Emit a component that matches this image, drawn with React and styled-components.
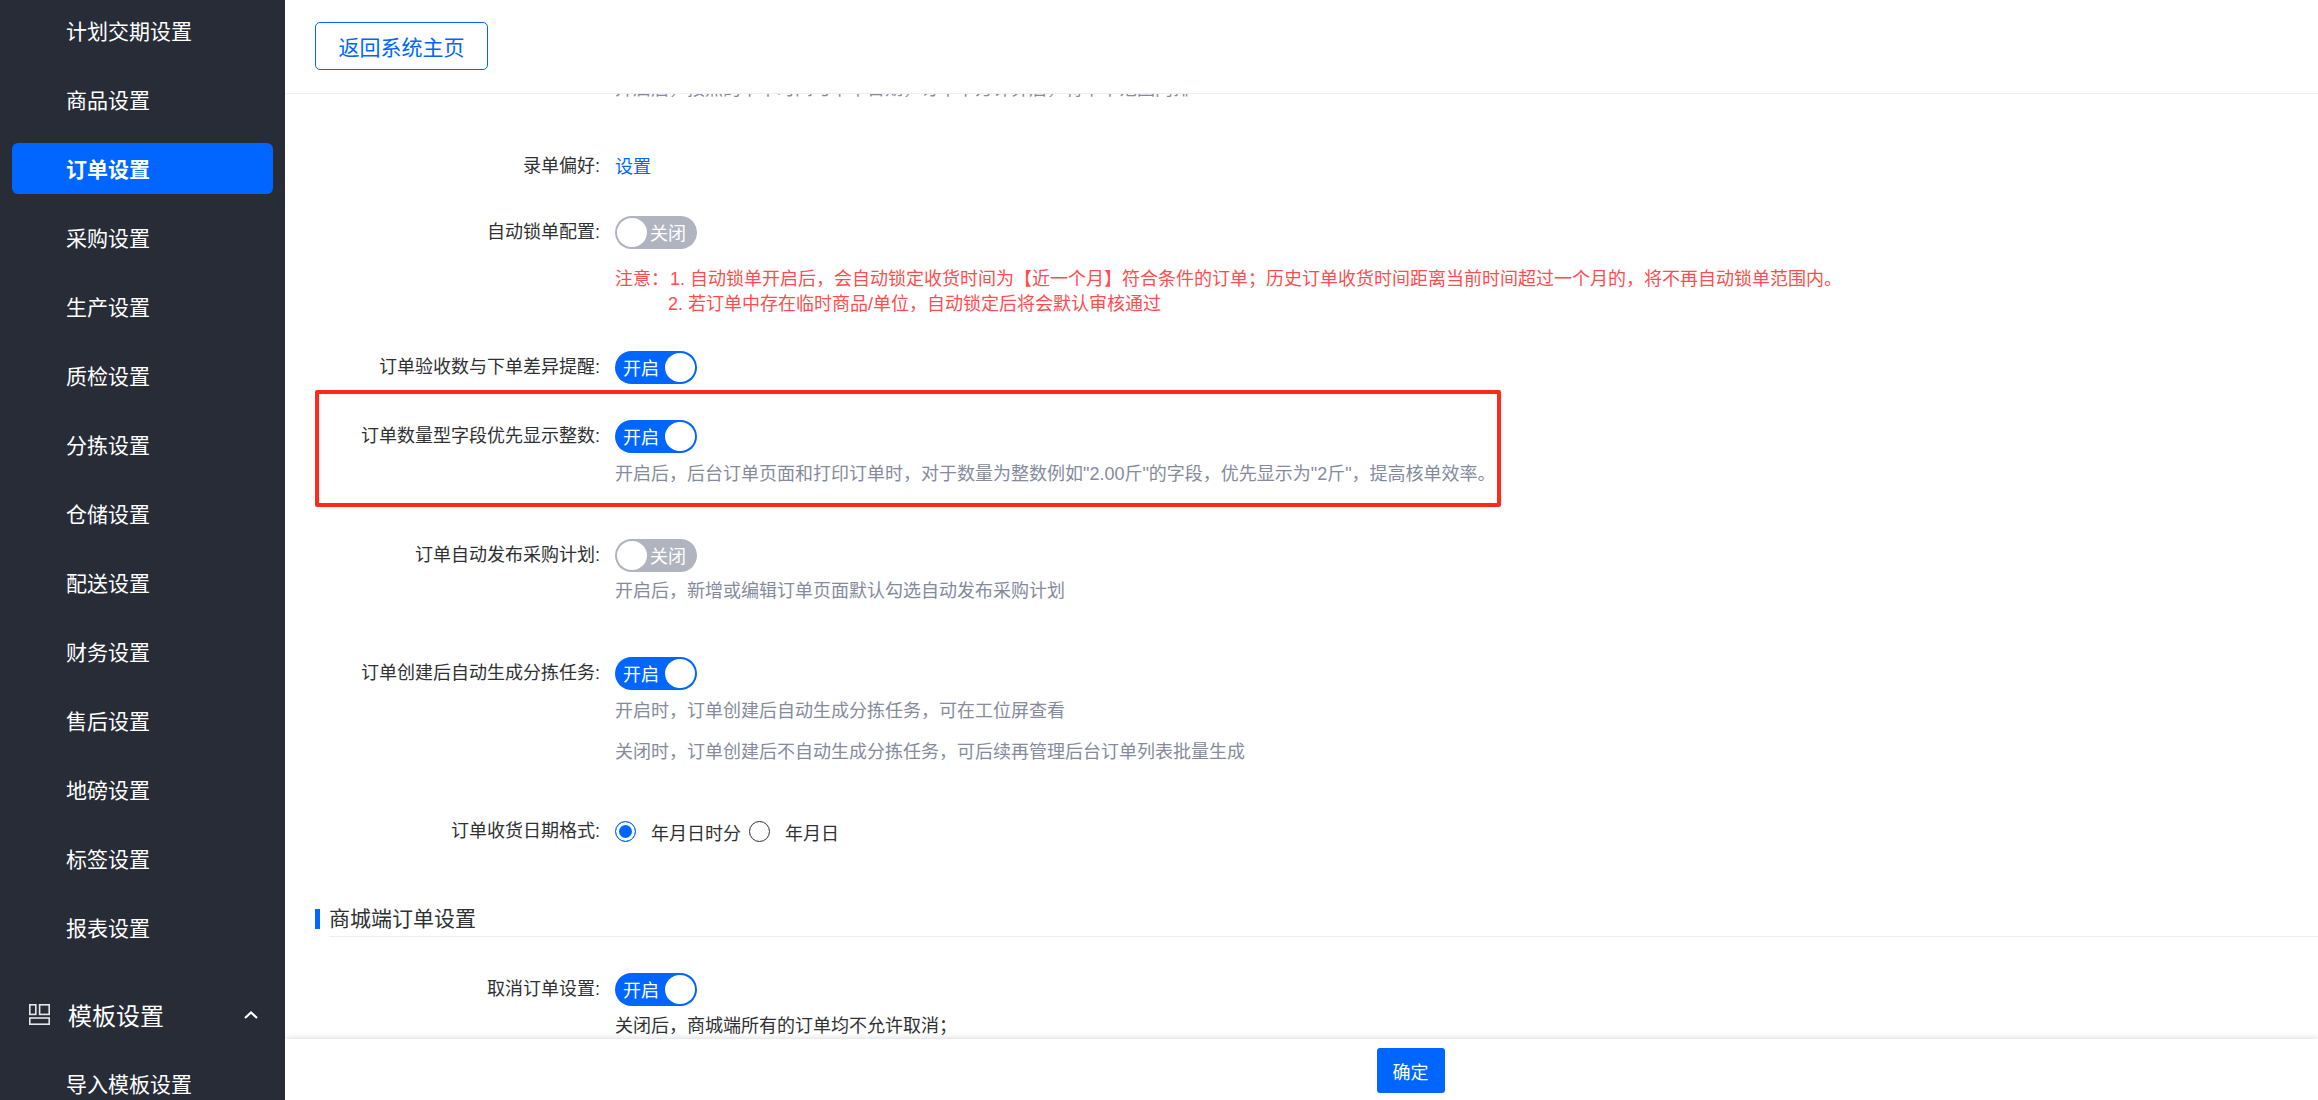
import styled, { createGlobalStyle } from "styled-components";

const navItems = [
  "计划交期设置",
  "商品设置",
  "订单设置",
  "采购设置",
  "生产设置",
  "质检设置",
  "分拣设置",
  "仓储设置",
  "配送设置",
  "财务设置",
  "售后设置",
  "地磅设置",
  "标签设置",
  "报表设置",
];

const Switch = ({ on }) => (
  <SwitchTrack $on={on}>
    <SwitchText $on={on}>{on ? "开启" : "关闭"}</SwitchText>
    <SwitchKnob $on={on} />
  </SwitchTrack>
);

export default function App() {
  return (
    <Page>
      <GlobalStyle />
      <Sidebar>
        {navItems.map((item) => (
          <NavItem key={item} $active={item === "订单设置"}>
            {item}
          </NavItem>
        ))}
        <NavGroup>
          <svg width="21" height="21" viewBox="0 0 21 21" fill="none" stroke="#e6e7ea" strokeWidth="1.6">
            <rect x="0.8" y="0.8" width="6" height="9.6" />
            <rect x="10.6" y="0.8" width="9.6" height="9.6" />
            <rect x="0.8" y="14" width="19.4" height="6.2" />
          </svg>
          <NavGroupTitle>模板设置</NavGroupTitle>
          <svg width="14" height="8" viewBox="0 0 14 8" fill="none" stroke="#fff" strokeWidth="2.2">
            <path d="M1 7l6-5.5L13 7" />
          </svg>
        </NavGroup>
        <NavItem>导入模板设置</NavItem>
      </Sidebar>

      <Main>
        <TopBar>
          <BackButton>返回系统主页</BackButton>
        </TopBar>

        <Scroller>
          <Form>
            <Hint $muted>开启后，按照的下单时间与下单日期，订单下方计算后，将下单范围内排</Hint>

            <Row $top={50}>
              <Label>录单偏好:</Label>
              <Field>
                <LinkText>设置</LinkText>
              </Field>
            </Row>

            <Row $top={31}>
              <Label>自动锁单配置:</Label>
              <Field>
                <Switch />
                <Note>
                  <div>
                    <NoteLabel>注意：</NoteLabel>
                    1. 自动锁单开启后，会自动锁定收货时间为【近一个月】符合条件的订单；历史订单收货时间距离当前时间超过一个月的，将不再自动锁单范围内。
                  </div>
                  <NoteIndent>2. 若订单中存在临时商品/单位，自动锁定后将会默认审核通过</NoteIndent>
                </Note>
              </Field>
            </Row>

            <Row $top={33}>
              <Label>订单验收数与下单差异提醒:</Label>
              <Field>
                <Switch on />
              </Field>
            </Row>

            <Row $top={36}>
              <Label>订单数量型字段优先显示整数:</Label>
              <Field>
                <Switch on />
                <Hint $muted $top={7}>开启后，后台订单页面和打印订单时，对于数量为整数例如"2.00斤"的字段，优先显示为"2斤"，提高核单效率。</Hint>
              </Field>
            </Row>

            <Row $top={54}>
              <Label>订单自动发布采购计划:</Label>
              <Field>
                <Switch />
                <Hint $muted $top={5}>开启后，新增或编辑订单页面默认勾选自动发布采购计划</Hint>
              </Field>
            </Row>

            <Row $top={55}>
              <Label>订单创建后自动生成分拣任务:</Label>
              <Field>
                <Switch on />
                <Hint $muted $top={7}>开启时，订单创建后自动生成分拣任务，可在工位屏查看</Hint>
                <Hint $muted $top={16}>关闭时，订单创建后不自动生成分拣任务，可后续再管理后台订单列表批量生成</Hint>
              </Field>
            </Row>

            <Row $top={52}>
              <Label>订单收货日期格式:</Label>
              <RadioGroup>
                <Radio $checked />
                <RadioText>年月日时分</RadioText>
                <Radio />
                <RadioText>年月日</RadioText>
              </RadioGroup>
            </Row>

            <SectionHead>
              <SectionTitle>商城端订单设置</SectionTitle>
            </SectionHead>

            <Row $top={36}>
              <Label>取消订单设置:</Label>
              <Field>
                <Switch on />
                <Hint $top={6}>关闭后，商城端所有的订单均不允许取消；</Hint>
              </Field>
            </Row>
          </Form>
        </Scroller>

        <Footer>
          <ConfirmButton>确定</ConfirmButton>
        </Footer>

        <RedBox />
      </Main>
    </Page>
  );
}

const GlobalStyle = createGlobalStyle`
  html, body {
    margin: 0;
    height: 100%;
    overflow: hidden;
  }
  body {
    font-family: "Liberation Sans", "Noto Sans CJK SC", sans-serif;
    color: #303133;
  }
  * {
    box-sizing: border-box;
  }
`;

const Page = styled.div`
  display: flex;
  height: 1100px;
  background: #fff;
`;

const Sidebar = styled.nav`
  flex: 0 0 285px;
  height: 100%;
  padding: 5px 12px 0;
  overflow: hidden;
  background: #282c37;
`;

const NavItem = styled.div`
  height: 51px;
  margin-bottom: 18px;
  padding-left: 54px;
  border-radius: 6px;
  font-size: 21px;
  line-height: 53px;
  font-weight: ${(p) => (p.$active ? 700 : 400)};
  color: #fff;
  background: ${(p) => (p.$active ? "#0066ff" : "transparent")};
`;

const NavGroup = styled.div`
  display: flex;
  align-items: center;
  height: 51px;
  margin: 36px 15px 18px 17px;
  color: #fff;
`;

const NavGroupTitle = styled.div`
  flex: 1;
  margin-left: 18px;
  font-size: 24px;
`;

const Main = styled.main`
  position: relative;
  flex: 1;
  display: flex;
  flex-direction: column;
  min-width: 0;
  height: 100%;
`;

const TopBar = styled.header`
  position: relative;
  flex: 0 0 94px;
  padding: 22px 30px 0;
  border-bottom: 1px solid #eceef1;
  background: #fff;
`;

const BackButton = styled.button`
  width: 173px;
  height: 48px;
  padding: 0;
  border: 1px solid #0066ff;
  border-radius: 5px;
  font: inherit;
  font-size: 21px;
  color: #0066ff;
  background: #fff;
`;

const Scroller = styled.div`
  flex: 1;
  min-height: 0;
  overflow: hidden;
`;

const Form = styled.div`
  margin-top: -19px;
  padding-left: 330px;
`;

const Row = styled.div`
  display: flex;
  gap: 15px;
  margin-top: ${(p) => p.$top}px;
  margin-left: -330px;
`;

const Label = styled.div`
  flex: 0 0 315px;
  font-size: 18px;
  line-height: 33px;
  text-align: right;
  color: #303133;
`;

const Field = styled.div`
  flex: 1;
  min-width: 0;
  font-size: 18px;
  line-height: 35px;
`;

const LinkText = styled.span`
  color: #0066ff;
`;

const SwitchTrack = styled.div`
  display: flex;
  align-items: center;
  justify-content: space-between;
  flex-direction: ${(p) => (p.$on ? "row" : "row-reverse")};
  width: 82px;
  height: 33px;
  padding: 2px;
  border-radius: 17px;
  background: ${(p) => (p.$on ? "#0066ff" : "#b0b4bf")};
`;

const SwitchText = styled.span`
  margin: ${(p) => (p.$on ? "0 0 0 6px" : "0 9px 0 0")};
  padding-top: 4px;
  font-size: 18px;
  line-height: 25px;
  color: #fff;
`;

const SwitchKnob = styled.span`
  width: 30px;
  height: 29px;
  border-radius: 50%;
  background: #fff;
`;

const Hint = styled.div`
  margin-top: ${(p) => p.$top || 0}px;
  margin-bottom: -2px;
  padding-top: 2px;
  font-size: 18px;
  line-height: 25px;
  white-space: nowrap;
  color: ${(p) => (p.$muted ? "#858b9c" : "#303133")};
`;

const Note = styled.div`
  margin-top: 18px;
  margin-bottom: 1px;
  font-size: 18px;
  line-height: 25px;
  white-space: nowrap;
  color: #ff4d4f;
`;

const NoteLabel = styled.span`
  display: inline-block;
  width: 55px;
`;

const NoteIndent = styled.div`
  padding-left: 53px;
`;

const RadioGroup = styled.div`
  display: flex;
  align-items: center;
  height: 33px;
`;

const Radio = styled.span`
  flex: 0 0 21px;
  width: 21px;
  height: 21px;
  border: 1.5px solid ${(p) => (p.$checked ? "#0066ff" : "#303133")};
  border-radius: 50%;
  background: ${(p) => (p.$checked ? "#0066ff" : "#fff")};
  box-shadow: ${(p) => (p.$checked ? "inset 0 0 0 3px #fff" : "none")};
`;

const RadioText = styled.span`
  margin: 0 8px 0 15px;
  font-size: 18px;
  color: #303133;
`;

const SectionHead = styled.div`
  margin: 54px 0 0 -300px;
`;

const SectionTitle = styled.div`
  position: relative;
  padding: 0 0 2px 14px;
  font-size: 21px;
  line-height: 33px;
  &::before {
    content: "";
    position: absolute;
    left: 0;
    top: 7px;
    width: 5px;
    height: 20px;
    background: #0066ff;
  }
  &::after {
    content: "";
    position: absolute;
    left: 14px;
    right: 0;
    bottom: 0;
    height: 1px;
    background: #eceef1;
  }
`;

const Footer = styled.footer`
  position: relative;
  flex: 0 0 61px;
  display: flex;
  justify-content: center;
  padding: 9px 0 0 218px;
  background: #fff;
  box-shadow: 0 -1px 6px rgba(40, 44, 55, 0.16);
`;

const ConfirmButton = styled.button`
  width: 68px;
  height: 45px;
  padding: 0;
  border: 0;
  border-radius: 3px;
  font: inherit;
  font-size: 18px;
  color: #fff;
  background: #0066ff;
`;

const RedBox = styled.div`
  position: absolute;
  left: 30px;
  top: 390px;
  width: 1186px;
  height: 117px;
  border: 4px solid #ff2a1a;
  border-radius: 2px;
  pointer-events: none;
`;
